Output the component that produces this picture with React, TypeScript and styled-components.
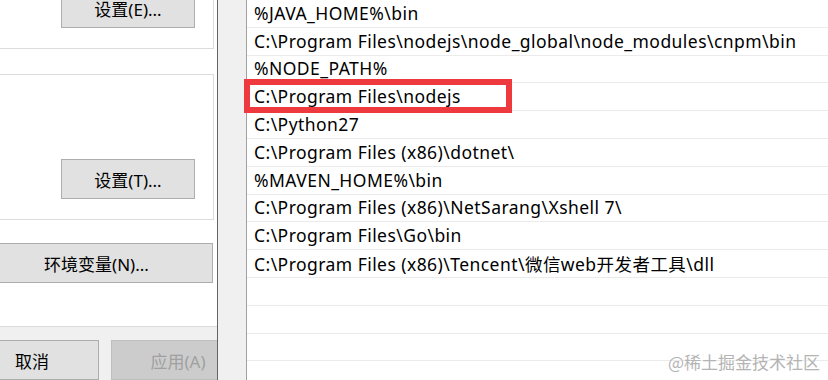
import React from 'react'
import styled, { createGlobalStyle } from 'styled-components'

const paths = [
  '%JAVA_HOME%\\bin',
  'C:\\Program Files\\nodejs\\node_global\\node_modules\\cnpm\\bin',
  '%NODE_PATH%',
  'C:\\Program Files\\nodejs',
  'C:\\Python27',
  'C:\\Program Files (x86)\\dotnet\\',
  '%MAVEN_HOME%\\bin',
  'C:\\Program Files (x86)\\NetSarang\\Xshell 7\\',
  'C:\\Program Files\\Go\\bin',
  'C:\\Program Files (x86)\\Tencent\\微信web开发者工具\\dll',
  '',
  '',
  '',
  '',
]

const App: React.FC = () => {
  return (
    <Page>
      <GlobalStyle />
      <LeftDialog>
        <TabPage>
          <GroupBox $top={-22} $height={71}>
            <Button $width={134}>设置(E)...</Button>
          </GroupBox>
          <GroupBox $top={25} $height={146}>
            <Button $width={134}>设置(T)...</Button>
          </GroupBox>
          <WideButton>环境变量(N)...</WideButton>
        </TabPage>
        <Footer>
          <Button $width={134} $shift={-35}>
            取消
          </Button>
          <Button $width={134} disabled>
            应用(A)
          </Button>
        </Footer>
      </LeftDialog>

      <Gutter />

      <PathList>
        {paths.map((p, i) => (
          <Row key={i}>{p}</Row>
        ))}
        <Highlight />
      </PathList>

      <Watermark>@稀土掘金技术社区</Watermark>
    </Page>
  )
}

const GlobalStyle = createGlobalStyle`
  html, body {
    margin: 0;
    padding: 0;
    background: #ffffff;
  }
  body {
    font-family: "Noto Sans", "Noto Sans CJK SC", sans-serif;
  }
`

const Page = styled.div`
  position: relative;
  display: flex;
  width: 828px;
  height: 380px;
  overflow: hidden;
  background: #ffffff;
  font-family: "Noto Sans", "Noto Sans CJK SC", sans-serif;
  color: #000;
`

const LeftDialog = styled.div`
  display: flex;
  flex-direction: column;
  width: 217px;
  flex: none;
  border-right: 1px solid #646464;
  overflow: hidden;
`

const TabPage = styled.div`
  display: flex;
  flex-direction: column;
  align-items: flex-end;
  height: 335px;
  background: #ffffff;
  border-bottom: 1px solid #dcdcdc;
  box-sizing: border-box;
  padding-right: 3px;
`

const GroupBox = styled.div<{ $top: number; $height: number }>`
  display: flex;
  align-items: flex-end;
  justify-content: flex-end;
  box-sizing: border-box;
  width: 240px;
  height: ${(p) => p.$height}px;
  margin-top: ${(p) => p.$top}px;
  border: 1px solid #dcdcdc;
  padding: 0 18px 20px 0;
  flex: none;
`

const Button = styled.button<{ $width: number; $shift?: number }>`
  flex: none;
  box-sizing: border-box;
  width: ${(p) => p.$width}px;
  height: 40px;
  margin: 0 0 0 ${(p) => p.$shift ?? 0}px;
  padding: 0;
  background: #e1e1e1;
  border: 1px solid #adadad;
  border-radius: 0;
  font-family: "Noto Sans", "Noto Sans CJK SC", sans-serif;
  font-size: 17px;
  color: #000;

  &:disabled {
    background: #cccccc;
    border-color: #bfbfbf;
    color: #a0a0a0;
  }
`

const WideButton = styled(Button).attrs({ $width: 233 })`
  margin: 23px 1px 0 0;
`

const Footer = styled.div`
  display: flex;
  gap: 12px;
  flex: 1;
  padding-top: 13px;
  background: #f0f0f0;
`

const Gutter = styled.div`
  width: 28px;
  flex: none;
  background: #f0f0f0;
  border-right: 1px solid #a0a0a0;
`

const PathList = styled.div`
  position: relative;
  flex: 1;
  display: flex;
  flex-direction: column;
  background: #ffffff;
`

const Row = styled.div`
  flex: none;
  box-sizing: border-box;
  height: 27.8px;
  padding: 0 0 1px 7px;
  border-bottom: 1px solid #ebebeb;
  display: flex;
  align-items: center;
  font-size: 17.5px;
  letter-spacing: 0.45px;
  white-space: nowrap;
`

const Highlight = styled.div`
  position: absolute;
  left: -3px;
  top: 79px;
  width: 268px;
  height: 34px;
  box-sizing: border-box;
  border: 6px solid #ee3a3e;
`

const Watermark = styled.div`
  position: absolute;
  right: 8px;
  bottom: 6px;
  font-size: 17px;
  color: #b4b4b4;
  text-shadow: 0 0 1px #ffffff;
  font-family: "Noto Sans CJK SC", sans-serif;
`

export default App
